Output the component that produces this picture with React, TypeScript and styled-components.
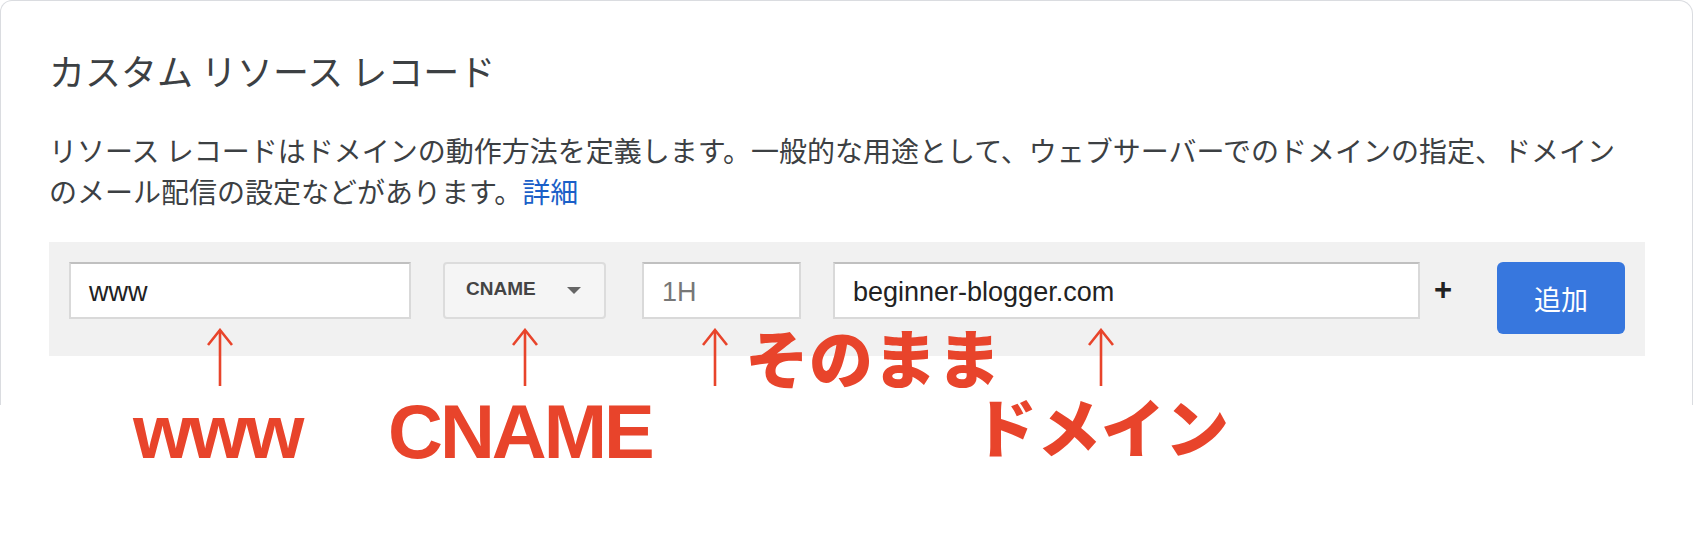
import React from 'react';
import styled, { createGlobalStyle } from 'styled-components';

const GlobalStyle = createGlobalStyle`
  html, body {
    margin: 0;
    padding: 0;
    background: #fff;
  }
  * {
    box-sizing: border-box;
  }
`;

const JP = `"Noto Sans CJK JP", "Noto Sans", sans-serif`;
const LATIN = `"Liberation Sans", Arial, sans-serif`;

export default function App() {
  return (
    <Page>
      <GlobalStyle />
      <Card>
        <Title>カスタム リソース レコード</Title>
        <Description>
          リソース レコードはドメインの動作方法を定義します。一般的な用途として、ウェブサーバーでのドメインの指定、ドメインのメール配信の設定などがあります。
          <Link href="#">詳細</Link>
        </Description>
        <RecordRow>
          <TextField $width={342}>www</TextField>
          <Select>
            <SelectLabel>CNAME</SelectLabel>
            <Caret />
          </Select>
          <TextField $width={159} $muted>
            1H
          </TextField>
          <TextField $width={587}>beginner-blogger.com</TextField>
          <Plus>+</Plus>
          <AddButton>追加</AddButton>
        </RecordRow>
      </Card>

      <Overlay>
        {ARROWS.map((x) => (
          <Arrow key={x} $x={x} width="26" height="58" viewBox="0 0 26 58">
            <line x1="13" y1="2" x2="13" y2="58" />
            <polyline points="1,17 13,2 25,17" />
          </Arrow>
        ))}
        <Note $x={133} $y={394} $latin>
          www
        </Note>
        <Note $x={388} $y={394} $latin>
          CNAME
        </Note>
        <Note $x={745} $y={323}>そのまま</Note>
        <Note $x={973} $y={392}>ドメイン</Note>
      </Overlay>
    </Page>
  );
}

const ARROWS = [220, 525, 715, 1101];

const Page = styled.div`
  position: relative;
  width: 1694px;
  height: 555px;
  overflow: hidden;
  background: #fff;
`;

const Card = styled.div`
  width: 1693px;
  height: 405px;
  border: 1px solid #dadce0;
  border-bottom: none;
  border-radius: 12px 14px 0 0;
  padding: 49px 47px 0 48px;
  font-family: ${JP};
  color: #3c4043;
`;

const Title = styled.h2`
  margin: 0;
  font-size: 36px;
  font-weight: 400;
  line-height: 40px;
  color: #3c4043;
`;

const Description = styled.p`
  margin: 40px 0 30px;
  padding-right: 12px;
  font-size: 28px;
  line-height: 41px;
  color: #3c4043;
`;

const Link = styled.a`
  color: #1a5fc8;
  text-decoration: none;
`;

const RecordRow = styled.div`
  display: flex;
  align-items: flex-start;
  height: 114px;
  padding: 20px;
  background: #f1f1f1;
`;

const TextField = styled.div<{ $width: number; $muted?: boolean }>`
  display: flex;
  align-items: center;
  width: ${(p) => p.$width}px;
  height: 57px;
  margin-right: 32px;
  padding: 4px 18px 0;
  background: #fff;
  border: 2px solid #d9d9d9;
  border-top-color: #c0c0c0;
  font-family: ${LATIN};
  font-size: 27px;
  color: ${(p) => (p.$muted ? '#777' : '#222')};
`;

const Select = styled.div`
  display: flex;
  align-items: center;
  justify-content: space-between;
  width: 163px;
  height: 57px;
  margin-right: 36px;
  padding: 0 23px 0 21px;
  background: #f5f5f5;
  border: 2px solid #dcdcdc;
  border-radius: 4px;
`;

const SelectLabel = styled.span`
  font-family: ${LATIN};
  font-size: 19px;
  font-weight: 700;
  color: #444;
  margin-top: -4px;
`;

const Caret = styled.span`
  width: 0;
  height: 0;
  border-left: 7.5px solid transparent;
  border-right: 7.5px solid transparent;
  border-top: 7px solid #666;
`;

const Plus = styled.span`
  display: flex;
  align-items: center;
  height: 57px;
  margin-left: -18px;
  padding-bottom: 2px;
  font-family: ${LATIN};
  font-size: 31px;
  font-weight: 700;
  color: #222;
`;

const AddButton = styled.button`
  width: 128px;
  height: 72px;
  margin-left: auto;
  border: none;
  border-radius: 6px;
  background: #3777de;
  color: #fff;
  font-family: ${JP};
  font-size: 27px;
  cursor: pointer;
`;

const Overlay = styled.div`
  position: absolute;
  inset: 0;
  pointer-events: none;
`;

const Arrow = styled.svg<{ $x: number }>`
  position: absolute;
  left: ${(p) => p.$x - 13}px;
  top: 328px;
  fill: none;
  stroke: #e8442b;
  stroke-width: 2.6;
`;

const Note = styled.span<{ $x: number; $y: number; $latin?: boolean }>`
  position: absolute;
  left: ${(p) => p.$x}px;
  top: ${(p) => p.$y}px;
  font-family: ${(p) => (p.$latin ? LATIN : JP)};
  font-size: ${(p) => (p.$latin ? 76 : 64)}px;
  font-weight: ${(p) => (p.$latin ? 700 : 900)};
  letter-spacing: ${(p) => (p.$latin ? -3 : 0)}px;
  line-height: 1;
  color: #e8442b;
  white-space: nowrap;
`;
